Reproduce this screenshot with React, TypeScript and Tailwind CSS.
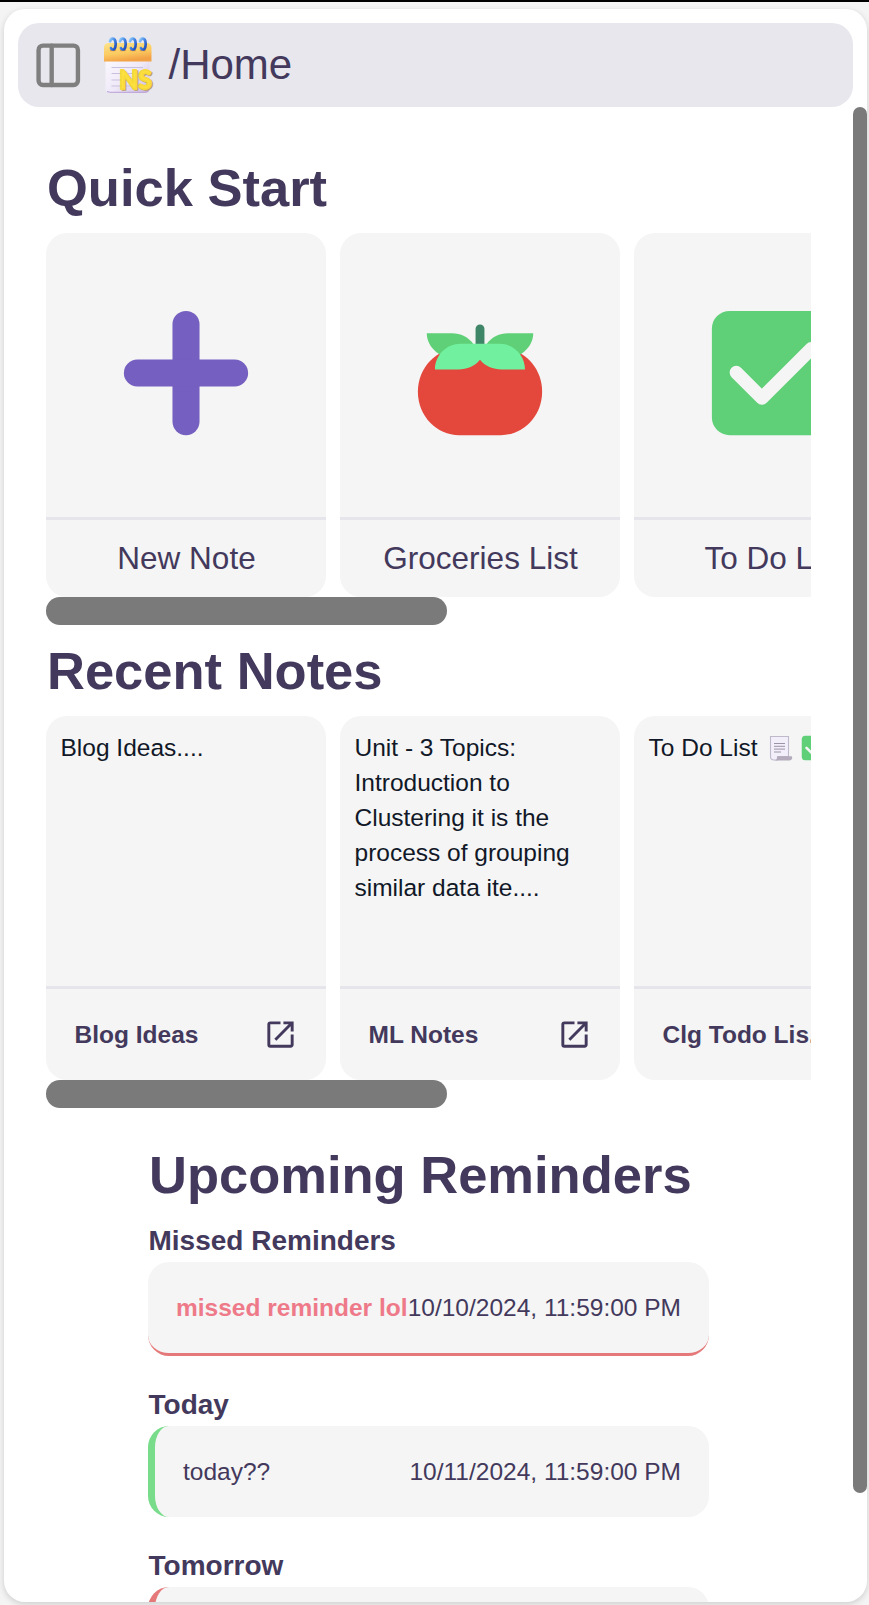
import React from "react";
import { PanelLeft } from "lucide-react";

function Logo() {
  return (
    <svg viewBox="0 0 56 60" className="h-[60px] w-[56px] shrink-0">
      <defs>
        <linearGradient id="cover" x1="0" y1="0" x2="0.3" y2="1">
          <stop offset="0" stopColor="#fde38a" />
          <stop offset="0.6" stopColor="#fccb62" />
          <stop offset="1" stopColor="#f2a246" />
        </linearGradient>
        <linearGradient id="paper" x1="0" y1="0" x2="1" y2="1">
          <stop offset="0" stopColor="#fdfbff" />
          <stop offset="0.55" stopColor="#efe9f8" />
          <stop offset="1" stopColor="#c9b5e0" />
        </linearGradient>
        <linearGradient id="ring" x1="0" y1="0" x2="1" y2="1">
          <stop offset="0" stopColor="#8fcbfa" />
          <stop offset="0.5" stopColor="#3f80e0" />
          <stop offset="1" stopColor="#2148b4" />
        </linearGradient>
      </defs>
      <rect x="4.500" y="18" width="44" height="39.800" rx="4" fill="url(#paper)" />
      <path d="M6 56.500Q8 57.300 10 57.300H44Q47 57.200 48 55" fill="none" stroke="#b9a0d6" strokeWidth="1" />
      <path d="M10.500 32.500H42M10.500 38.500H42M10.500 45H42M10.500 51H30" stroke="#c9c0de" strokeWidth="1.200" />
      <path d="M3 12.500a4.500 4.500 0 0 1 4.500-4.500H46a4.500 4.500 0 0 1 4.500 4.500V26.500H3z" fill="url(#cover)" />
      {[0, 10, 20, 30].map((dx) => (
        <g key={dx} transform={`translate(${dx} 0)`}>
          <path d="M9.500 15.500h5" stroke="#e8a13f" strokeWidth="1.500" strokeLinecap="round" />
          <path d="M9 6.200C9.600 3.300 13.300 2.300 14.300 6.200c.8 3.300.2 8.300-2.500 8.300-1 0-1.600-.6-1.900-1.400" fill="none" stroke="url(#ring)" strokeWidth="2.700" strokeLinecap="round" />
        </g>
      ))}
      <text x="19.500" y="54.700" fontFamily="Lato, sans-serif" fontSize="27" fontWeight="900" fill="#b9a063" stroke="#b9a063" strokeWidth="1.600" strokeLinejoin="round" textLength="32.500" lengthAdjust="spacingAndGlyphs">NS</text>
      <text x="18.300" y="53.500" fontFamily="Lato, sans-serif" fontSize="27" fontWeight="900" fill="#fde13f" stroke="#f8d93a" strokeWidth="1.800" strokeLinejoin="round" textLength="32.500" lengthAdjust="spacingAndGlyphs">NS</text>
    </svg>
  );
}

function Plus() {
  return (
    <svg viewBox="0 0 32 32" className="size-[142px]">
      <rect x="12.950" y="2" width="6.100" height="28" rx="3.050" fill="#755fc0" />
      <rect x="2" y="12.950" width="28" height="6.100" rx="3.050" fill="#755fc0" />
    </svg>
  );
}

function Tomato() {
  return (
    <svg viewBox="0 0 32 32" className="size-[142px]">
      <path d="M11.330 30C6.170 30 2 25.600 2 20.200S6.170 10.400 11.330 10.400h9.340C25.830 10.400 30 14.800 30 20.200S25.830 30 20.670 30z" fill="#e4473c" />
      <path d="M4 7.050h5.700c1.900 0 3.700.9 4.800 2.400L11 13C7.500 13 4 10.500 4 7.050z" fill="#5fd077" />
      <path d="M28 7.050h-5.700c-1.900 0-3.700.9-4.800 2.400L21 13c3.500 0 7-2.500 7-5.950z" fill="#5fd077" />
      <path d="M15 10V6.050a1 1 0 0 1 2 0V10z" fill="#3f8668" />
      <path d="M5.850 15.200C5.850 12 8.450 9.400 11.600 9.400h8.800c3.150 0 5.750 2.600 5.750 5.800H20.900c-2 0-3.800-.8-4.900-2.200-1.100 1.400-2.900 2.200-4.900 2.200z" fill="#71f09f" />
    </svg>
  );
}

function Check({ className }: { className: string }) {
  return (
    <svg viewBox="0 0 32 32" className={className}>
      <rect x="2" y="2" width="28" height="28" rx="4" fill="#5fd077" />
      <path d="M7.500 15.870l5.780 5.780L24.400 10.530" fill="none" stroke="#f5f5f5" strokeWidth="3" strokeLinecap="round" strokeLinejoin="round" />
    </svg>
  );
}

function Scroll() {
  return (
    <svg viewBox="0 0 28 28" className="size-7 shrink-0">
      <path d="M3.500 2.500h18v20h-11v3.500H7a3.500 3.500 0 0 1-3.500-3.500z" fill="#f2eefa" stroke="#c0b9cc" strokeWidth="1.100" />
      <path d="M7 26.500c2.500 0 2.800-1.400 3-2.700.1-1 .8-1.600 1.800-1.600H24c.8 0 1.200.5 1.200 1.200 0 1.800-1.200 3.100-3 3.100z" fill="#b4acbc" />
      <path d="M7 9.500h11M7 12.300h11M7 15.100h11M7 18h7" stroke="#9b93a6" strokeWidth="1" />
    </svg>
  );
}

function OpenIcon() {
  return (
    <svg viewBox="0 0 24 24" className="size-[35px] shrink-0" fill="currentColor">
      <path d="M19 19H5V5h7V3H5a2 2 0 0 0-2 2v14a2 2 0 0 0 2 2h14c1.100 0 2-.9 2-2v-7h-2v7zM14 3v2h3.590l-9.830 9.830 1.410 1.410L19 6.410V10h2V3h-7z" />
    </svg>
  );
}

function Strip({ children }: { children: React.ReactNode }) {
  return (
    <div>
      <div className="flex gap-3.5 overflow-hidden">{children}</div>
      <div className="h-7 w-[401px] rounded-full bg-[#7a7a7a]" />
    </div>
  );
}

function QuickCard({ label, children }: { label: string; children: React.ReactNode }) {
  return (
    <div className="flex h-[364px] w-[280px] shrink-0 flex-col rounded-[21px] bg-[#f5f5f5]">
      <div className="flex flex-1 items-center justify-center pb-1">{children}</div>
      <div className="h-20 border-t-[3px] border-[#e6e5eb] py-3.5 pl-px text-center text-[31.5px] leading-[49px]">{label}</div>
    </div>
  );
}

function NoteCard({ title, children }: { title: string; children: React.ReactNode }) {
  return (
    <div className="flex h-[364px] w-[280px] shrink-0 flex-col rounded-[21px] bg-[#f5f5f5] text-[24.5px] leading-[35px]">
      <div className="flex-1 py-3.5 pr-3 pl-[14.5px] text-[#111827]">{children}</div>
      <div className="flex h-[94px] items-center justify-between border-t-[3px] border-[#e6e5eb] pr-7 pl-[28.5px] font-bold">
        <span className="whitespace-nowrap">{title}</span>
        <OpenIcon />
      </div>
    </div>
  );
}

function Heading({ children }: { children: React.ReactNode }) {
  return <h1 className="mb-3.5 pl-px text-[52.5px] leading-[63px] font-bold whitespace-nowrap">{children}</h1>;
}

function Label({ children }: { children: React.ReactNode }) {
  return <h2 className="pl-[0.5px] text-[28px] leading-[42px] font-bold">{children}</h2>;
}

export default function App() {
  return (
    <div className="flex h-[1605px] w-[869px] flex-col overflow-hidden border-t-2 border-black bg-[#f4f4f4] pt-[7px] pr-[2px] pb-[3px] pl-1 font-['Liberation_Sans',Arial,sans-serif] text-[#43395c]">
      <div className="flex h-[1593px] flex-col overflow-hidden rounded-[21px] bg-white pt-3.5 shadow-[0_2px_6px_rgba(0,0,0,0.16)]">
        <header className="mx-3.5 flex h-[84px] shrink-0 items-center rounded-[21px] bg-[#e8e7ed] pl-3.5">
          <PanelLeft className="size-[52.5px] shrink-0 text-[#7f7f7f]" strokeWidth={2} />
          <div className="ml-4 flex">
            <Logo />
          </div>
          <span className="ml-3 text-[42px] leading-[56px]">/Home</span>
        </header>
        <div className="flex min-h-0 flex-1">
          <main className="w-[849px] overflow-hidden pt-[49px] pr-[42px] pl-[42px]">
            <Heading>Quick Start</Heading>
            <Strip>
              <QuickCard label="New Note"><Plus /></QuickCard>
              <QuickCard label="Groceries List"><Tomato /></QuickCard>
              <QuickCard label="To Do List"><Check className="size-[142px]" /></QuickCard>
            </Strip>
            <div className="mt-3.5">
              <Heading>Recent Notes</Heading>
            </div>
            <Strip>
              <NoteCard title="Blog Ideas">Blog Ideas....</NoteCard>
              <NoteCard title="ML Notes">
                Unit - 3 Topics:<br />Introduction to<br />Clustering it is the<br />process of grouping<br />similar data ite....
              </NoteCard>
              <NoteCard title="Clg Todo Lis...">
                <div className="flex items-center whitespace-nowrap">
                  <span className="mr-2.5">To Do List</span>
                  <Scroll />
                  <Check className="ml-[5px] size-7 shrink-0" />
                </div>
              </NoteCard>
            </Strip>
            <section className="mx-auto mt-[35px] w-[561px]">
              <Heading>Upcoming Reminders</Heading>
              <div className="flex flex-col gap-7 text-[24.5px] leading-[35px] whitespace-nowrap">
                <div>
                  <Label>Missed Reminders</Label>
                  <div className="flex justify-between rounded-[21px] border-b-[3px] border-[#e57878] bg-[#f5f5f5] p-7">
                    <span className="font-bold text-[#ee7a89]">missed reminder lol</span>
                    <span>10/10/2024, 11:59:00 PM</span>
                  </div>
                </div>
                <div>
                  <Label>Today</Label>
                  <div className="flex justify-between rounded-[21px] border-l-[7px] border-[#78dc8a] bg-[#f5f5f5] p-7">
                    <span>today??</span>
                    <span>10/11/2024, 11:59:00 PM</span>
                  </div>
                </div>
                <div>
                  <Label>Tomorrow</Label>
                  <div className="h-[91px] rounded-[21px] border-l-[7px] border-[#e57878] bg-[#f5f5f5]" />
                </div>
              </div>
            </section>
          </main>
          <div className="h-[1386px] w-3.5 shrink-0 rounded-full bg-[#7a7a7a]" />
        </div>
      </div>
    </div>
  );
}
